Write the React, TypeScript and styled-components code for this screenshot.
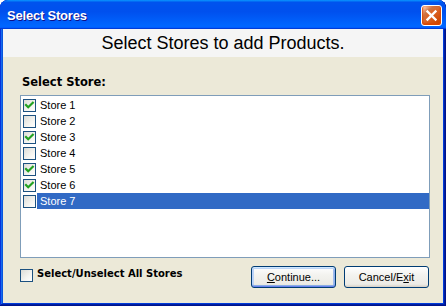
import React from 'react';
import styled, { createGlobalStyle } from 'styled-components';

const Global = createGlobalStyle`
  html, body { margin: 0; padding: 0; background: #ffffff; }
  body { width: 446px; height: 306px; overflow: hidden; }
`;

const Window = styled.div`
  width: 446px;
  height: 306px;
  box-sizing: border-box;
  display: flex;
  flex-direction: column;
  background: #0831d9;
  border-radius: 8px 8px 0 0;
  box-shadow: inset -1px -1px #00138c, inset 1px 1px #0831d9,
    inset -2px -2px #001ea0, inset 2px 2px #166aee,
    inset -3px -3px #003bda, inset 3px 3px #0855dd;
  overflow: hidden;
`;

const TitleBar = styled.div`
  height: 29px;
  flex: none;
  display: flex;
  align-items: center;
  padding: 1px 4px 0 7px;
  box-sizing: border-box;
  border-radius: 8px 8px 0 0;
  background: linear-gradient(
    180deg,
    #0997ff,
    #0053ee 8%,
    #0050ee 40%,
    #0066ff 88%,
    #0066ff 93%,
    #005bff 95%,
    #003dd7 96%,
    #003dd7
  );
`;

const Title = styled.div`
  flex: 1;
  color: #ffffff;
  font: bold 13px 'Liberation Sans', Arial, sans-serif;
  letter-spacing: -0.2px;
  text-shadow: 1px 1px #0f1089;
`;

const CloseButton = styled.div`
  width: 21px;
  height: 21px;
  box-sizing: border-box;
  border: 1px solid #ffffff;
  border-radius: 3px;
  display: flex;
  align-items: center;
  justify-content: center;
  background-image: radial-gradient(
    circle at 90% 90%,
    #cc4600 0,
    #dc6527 55%,
    #cd7546 70%,
    #ffccb2 90%,
    #ffffff 100%
  );
  box-shadow: inset 0 -1px 2px 1px #da4600;
`;

const Body = styled.div`
  flex: 1;
  margin: 0 3px 3px;
  background: #ece9d8;
  display: flex;
  flex-direction: column;
`;

const Header = styled.div`
  height: 28px;
  flex: none;
  background: #f5f5f5;
  display: flex;
  align-items: center;
  justify-content: center;
  font: 18px 'Liberation Sans', Arial, sans-serif;
  color: #000000;
`;

const Content = styled.div`
  flex: 1;
  display: flex;
  flex-direction: column;
  padding: 18px 13px 15px 17px;
`;

const SectionLabel = styled.div`
  font: bold 11.5px 'DejaVu Sans', Verdana, sans-serif;
  line-height: 14px;
  padding-left: 2px;
  margin-bottom: 6px;
  color: #000000;
`;

const List = styled.div`
  height: 163px;
  box-sizing: border-box;
  border: 1px solid #7f9db9;
  background: #ffffff;
  padding-top: 1px;
  margin-bottom: 8px;
`;

const Row = styled.div`
  height: 16px;
  display: flex;
  align-items: center;
  padding-left: 2px;
`;

const Box = styled.div`
  width: 13px;
  height: 13px;
  flex: none;
  box-sizing: border-box;
  border: 1px solid #1c5180;
  background: linear-gradient(135deg, #dcdcd7 0%, #f4f4f0 60%, #ffffff 100%);
  display: flex;
  align-items: center;
  justify-content: center;
`;

const ItemText = styled.div<{ $selected: boolean }>`
  flex: 1;
  height: 16px;
  margin-left: 1px;
  padding-left: 3px;
  line-height: 16px;
  font: 11px 'Liberation Sans', Arial, sans-serif;
  line-height: 16px;
  color: ${(p) => (p.$selected ? '#ffffff' : '#000000')};
  background: ${(p) => (p.$selected ? '#316ac5' : 'transparent')};
`;

const Footer = styled.div`
  display: flex;
  align-items: flex-start;
  height: 22px;
`;

const AllBox = styled(Box)`
  margin-top: 3px;
  margin-left: 0;
`;

const AllLabel = styled.div`
  margin-left: 4px;
  font: bold 10px 'DejaVu Sans', Verdana, sans-serif;
  line-height: 16px;
  color: #000000;
`;

const Spacer = styled.div`
  flex: 1;
`;

const Buttons = styled.div`
  display: flex;
  gap: 8px;
  margin-right: 1px;
`;

const Button = styled.div<{ $default?: boolean }>`
  width: 85px;
  height: 22px;
  box-sizing: border-box;
  border: 1px solid #003c74;
  border-radius: 3px;
  display: flex;
  align-items: center;
  justify-content: center;
  font: 11px 'Liberation Sans', Arial, sans-serif;
  color: #000000;
  background: linear-gradient(180deg, #ffffff 0%, #f3f3ef 40%, #ecebe6 86%, #d6d0c5 100%);
  box-shadow: ${(p) =>
    p.$default
      ? 'inset 0 1px #cee7ff, inset 0 -1px #6982ee, inset 1px 0 #b9d1fa, inset -1px 0 #8fb0ee, inset 0 2px #bcd4f6, inset 0 -2px #89ade4, inset 2px 0 #bcd4f6, inset -2px 0 #a1bcec'
      : 'none'};
`;

const Key = styled.span`
  text-decoration: underline;
`;

const Check = () => (
  <svg width="11" height="11" viewBox="0 0 11 11">
    <polyline
      points="2,5 4.2,7.3 8.8,2.7"
      fill="none"
      stroke="#21a121"
      strokeWidth="2.2"
      strokeLinecap="square"
    />
  </svg>
);

const stores = [
  { name: 'Store 1', checked: true },
  { name: 'Store 2', checked: false },
  { name: 'Store 3', checked: true },
  { name: 'Store 4', checked: false },
  { name: 'Store 5', checked: true },
  { name: 'Store 6', checked: true },
  { name: 'Store 7', checked: false, selected: true },
];

export default function App() {
  return (
    <>
      <Global />
      <Window>
        <TitleBar>
          <Title>Select Stores</Title>
          <CloseButton>
            <svg width="13" height="13" viewBox="0 0 13 13">
              <path d="M2.5 2.5 L10.5 10.5 M10.5 2.5 L2.5 10.5" stroke="#ffffff" strokeWidth="2.4" strokeLinecap="square" />
            </svg>
          </CloseButton>
        </TitleBar>
        <Body>
          <Header>Select Stores to add Products.</Header>
          <Content>
            <SectionLabel>Select Store:</SectionLabel>
            <List>
              {stores.map((s) => (
                <Row key={s.name}>
                  <Box>{s.checked && <Check />}</Box>
                  <ItemText $selected={!!s.selected}>{s.name}</ItemText>
                </Row>
              ))}
            </List>
            <Footer>
              <AllBox />
              <AllLabel>Select/Unselect All Stores</AllLabel>
              <Spacer />
              <Buttons>
                <Button $default>
                  <span>
                    <Key>C</Key>ontinue...
                  </span>
                </Button>
                <Button>
                  <span>
                    Cancel/E<Key>x</Key>it
                  </span>
                </Button>
              </Buttons>
            </Footer>
          </Content>
        </Body>
      </Window>
    </>
  );
}
